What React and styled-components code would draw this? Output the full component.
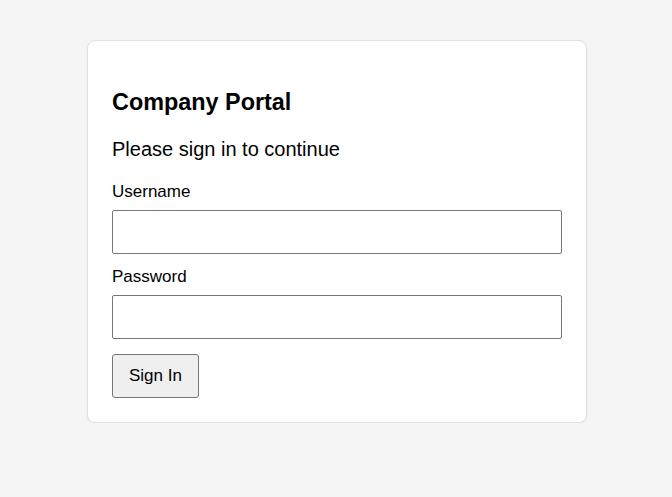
import React from "react";
import styled, { createGlobalStyle } from "styled-components";

const Global = createGlobalStyle`
  html, body { margin: 0; padding: 0; background: #f5f5f5; }
  body { font-family: "Liberation Sans", Arial, sans-serif; color: #000; }
  * { box-sizing: border-box; }
`;

const Page = styled.div`
  padding: 40px 0 0 2px;
  display: flex;
  justify-content: center;
`;

const Card = styled.form`
  width: 500px;
  background: #fff;
  border: 1px solid #e0e0e0;
  border-radius: 8px;
  box-shadow: 0 1px 3px rgba(0, 0, 0, 0.05);
  padding: 24px;
  display: flex;
  flex-direction: column;
  align-items: flex-start;
`;

const Title = styled.h2`
  margin: 24px 0 0;
  font-size: 23.4px;
  line-height: 27px;
  font-weight: bold;
`;

const Subtitle = styled.p`
  margin: 22px 0 0;
  font-size: 20px;
  line-height: 23px;
`;

const Label = styled.label`
  display: block;
  margin-top: ${(p) => p.$gap}px;
  font-size: 17px;
  line-height: 20px;
`;

const Input = styled.input`
  display: block;
  width: 100%;
  height: 44px;
  margin-top: 8px;
  border: 1px solid #767676;
  border-radius: 2px;
  padding: 0 8px;
  font-size: 16px;
  font-family: inherit;
  background: #fff;
`;

const Button = styled.button`
  margin-top: 15px;
  height: 44px;
  padding: 0 16px;
  border: 1px solid #767676;
  border-radius: 3px;
  background: #efefef;
  font-family: "Liberation Sans", Arial, sans-serif;
  font-size: 17px;
  color: #000;
`;

export default function App() {
  return (
    <>
      <Global />
      <Page>
        <Card onSubmit={(e) => e.preventDefault()}>
          <Title>Company Portal</Title>
          <Subtitle>Please sign in to continue</Subtitle>
          <Label $gap={21} htmlFor="u">Username</Label>
          <Input id="u" type="text" />
          <Label $gap={13} htmlFor="p">Password</Label>
          <Input id="p" type="password" />
          <Button type="submit">Sign In</Button>
        </Card>
      </Page>
    </>
  );
}
